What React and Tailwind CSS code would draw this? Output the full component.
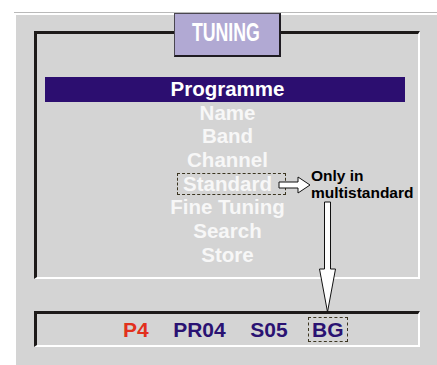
export default function App() {
  const items = ["Name", "Band", "Channel", "Standard", "Fine Tuning", "Search", "Store"];
  return (
    <div className="relative w-[437px] h-[365px] overflow-hidden bg-white font-['Liberation_Sans',Arial,sans-serif]">
      <div className="ml-[14px] mt-[12px] h-px bg-[#b9b9b9]" />
      <div className="ml-[16px] mt-[2px] h-[350px] bg-[#d4d4d4] pt-[16px] pl-[18px] pr-[17px]">
        <div className="relative h-[248px] border-t-[3px] border-l-[3px] border-t-[#1d1a19] border-l-[#1d1a19] border-r-2 border-b-2 border-r-white border-b-white pt-[43px] pl-[8px] pr-[13px]">
          <div className="absolute left-[137px] -top-[21px] w-[107px] h-[44px] bg-[#b1a9d3] border border-[#4a4650] border-r-2 border-b-2 border-r-[#1f1c22] border-b-[#1f1c22] flex items-center justify-center pb-[5px] pr-[2px]">
            <span className="inline-block text-white font-bold text-[25px] leading-none scale-x-[0.71]">TUNING</span>
          </div>
          <div className="h-[25px] bg-[#2c0e70] flex items-center justify-center pl-[5px]">
            <span className="text-white font-bold text-[20.5px] leading-none">Programme</span>
          </div>
          <div className="-mt-px">
            {items.map((t) => (
              <div key={t} className="h-[23.7px] flex items-center justify-center pl-[5px]">
                <span className="relative text-[#f7f7f7] font-bold text-[20.5px] leading-none">
                  {t}
                  {t === "Standard" && (
                    <span className="absolute -left-[6px] -right-[14px] -top-[1px] -bottom-[1px] border border-dashed border-[#3b3520]" />
                  )}
                </span>
              </div>
            ))}
          </div>
        </div>
        <div className="mt-[32px] h-[36px] border-t-[3px] border-l-[3px] border-t-[#1d1a19] border-l-[#1d1a19] border-r-2 border-b-2 border-r-white border-b-white flex items-center pl-[86px] gap-[24.5px] font-bold text-[21px] leading-none">
          <span className="text-[#e2301c]">P4</span>
          <span className="text-[#2a1272]">PR04</span>
          <span className="text-[#2a1272]">S05</span>
          <span className="relative text-[#2a1272]">
            BG
            <span className="absolute -left-[4px] -right-[4px] -top-[2px] -bottom-[2px] border border-dashed border-[#3b3520]" />
          </span>
        </div>
      </div>
      <div className="absolute left-[311px] top-[168px] text-black font-bold text-[15.5px] leading-[16.5px]">
        <div>Only in</div>
        <div>multistandard</div>
      </div>
      <svg className="absolute left-0 top-0" width="437" height="365" viewBox="0 0 437 365">
        <polygon points="279,182 298,182 298,177 310,185 298,193 298,188 279,188" fill="white" stroke="#111" strokeWidth="1" />
        <polygon points="324.5,202 330.5,202 330.5,269 335.5,269 327.5,312 319.5,269 324.5,269" fill="white" stroke="#111" strokeWidth="1" />
      </svg>
    </div>
  );
}
